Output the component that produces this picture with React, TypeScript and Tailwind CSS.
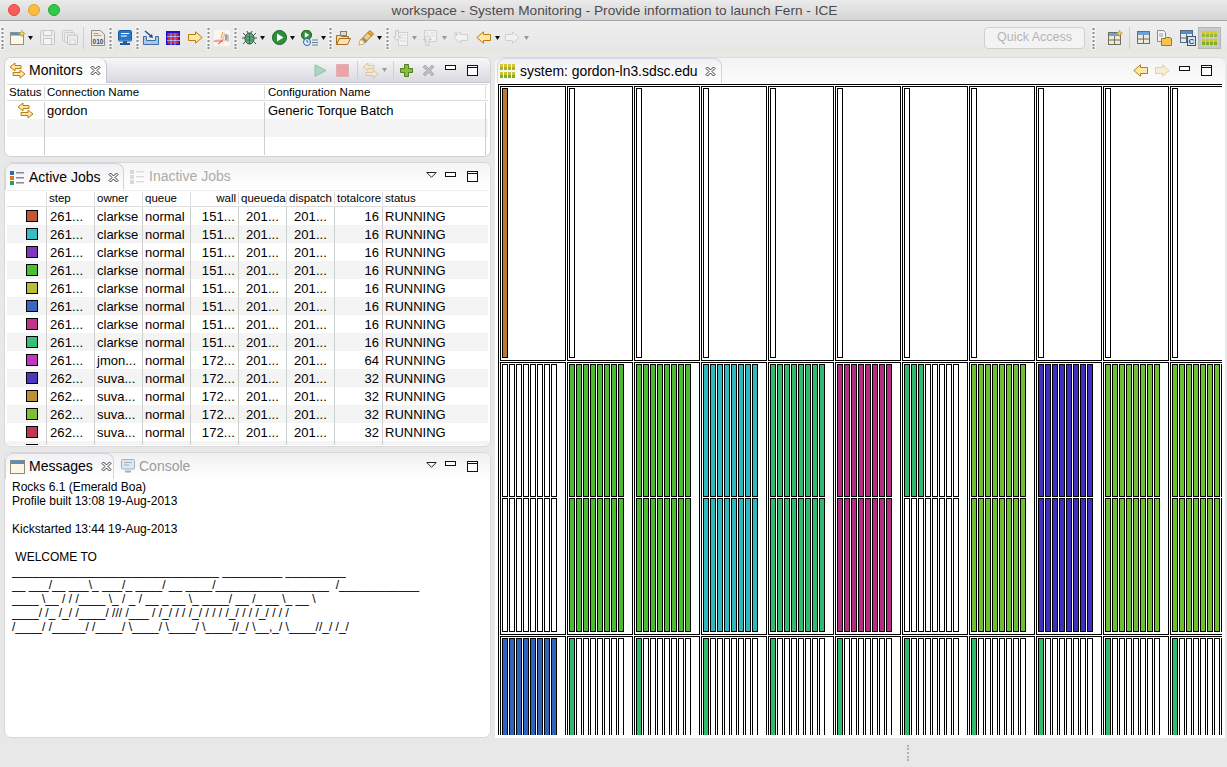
import type { ReactNode } from "react";

const jobs = [
  { color: "bg-[#BE5A36]", step: "261...", owner: "clarkse", wall: "151...", cores: 16 },
  { color: "bg-[#37BEC0]", step: "261...", owner: "clarkse", wall: "151...", cores: 16 },
  { color: "bg-[#7F37BE]", step: "261...", owner: "clarkse", wall: "151...", cores: 16 },
  { color: "bg-[#4DBE37]", step: "261...", owner: "clarkse", wall: "151...", cores: 16 },
  { color: "bg-[#B8BE37]", step: "261...", owner: "clarkse", wall: "151...", cores: 16 },
  { color: "bg-[#3768BE]", step: "261...", owner: "clarkse", wall: "151...", cores: 16 },
  { color: "bg-[#BE3787]", step: "261...", owner: "clarkse", wall: "151...", cores: 16 },
  { color: "bg-[#37BE78]", step: "261...", owner: "clarkse", wall: "151...", cores: 16 },
  { color: "bg-[#BE37C0]", step: "261...", owner: "jmon...", wall: "172...", cores: 64 },
  { color: "bg-[#4A37BE]", step: "262...", owner: "suva...", wall: "172...", cores: 32 },
  { color: "bg-[#BE8F37]", step: "262...", owner: "suva...", wall: "172...", cores: 32 },
  { color: "bg-[#7FBE37]", step: "262...", owner: "suva...", wall: "172...", cores: 32 },
  { color: "bg-[#BE3755]", step: "262...", owner: "suva...", wall: "172...", cores: 32 },
  { color: "bg-[#222222]", step: "", owner: "", wall: "", cores: "" },
];

const messages = [
  "Rocks 6.1 (Emerald Boa)",
  "Profile built 13:08 19-Aug-2013",
  "",
  "Kickstarted 13:44 19-Aug-2013",
  "",
  " WELCOME TO",
  "_______________________________ _________ _________",
  "__ ___/__ ___\\_ ___/_ ____/ __ ____/_________________  /____________",
  "____ \\__ / / /____ \\_ / _ / __ _ __ \\_ ____/ __ /_ __ \\_ __ \\",
  "____/ /_ /_/ /____/ /// /___ / /_/ / / /_/ / / / /_/ / / /_/ / / /",
  "/____/ /_____/ /____/ \\____/ \\____/ \\____//_/ \\__,_/ \\____//_/ /_/",
];

const TEAL = "bg-[#2FB9BF]";
const GREEN = "bg-[#4CBB32]";
const SEA = "bg-[#32BB6E]";
const PINK = "bg-[#B52E82]";
const LIME = "bg-[#6EBF32]";
const INDIGO = "bg-[#3F2FBF]";
const BLUE = "bg-[#2E64B9]";
const EMPTY = "bg-white";

// rows 2 and 3 of the system view, one entry per node
const nodes = [
  { top: EMPTY, topCount: 8, bottom: EMPTY, low: BLUE, lowCount: 8 },
  { top: GREEN, topCount: 8, bottom: GREEN, low: SEA, lowCount: 1 },
  { top: GREEN, topCount: 8, bottom: GREEN, low: SEA, lowCount: 1 },
  { top: TEAL, topCount: 8, bottom: TEAL, low: SEA, lowCount: 1 },
  { top: SEA, topCount: 8, bottom: SEA, low: SEA, lowCount: 1 },
  { top: PINK, topCount: 8, bottom: PINK, low: SEA, lowCount: 1 },
  { top: SEA, topCount: 3, bottom: EMPTY, low: SEA, lowCount: 1 },
  { top: LIME, topCount: 8, bottom: LIME, low: SEA, lowCount: 1 },
  { top: INDIGO, topCount: 8, bottom: INDIGO, low: SEA, lowCount: 1 },
  { top: LIME, topCount: 8, bottom: LIME, low: SEA, lowCount: 1 },
  { top: LIME, topCount: 8, bottom: LIME, low: SEA, lowCount: 1 },
];

const Dropdown = ({ gray, className = "" }: { gray?: boolean; className?: string }) => (
  <svg width="5" height="4" viewBox="0 0 5 4" className={`shrink-0 ${className}`}>
    <path d="M0 0h5L2.5 4z" fill={gray ? "#9a9a9a" : "#111"} />
  </svg>
);

const Grip = ({ className = "" }: { className?: string }) => (
  <svg width="5" height="24" viewBox="0 0 5 24" className={`shrink-0 ${className}`}>
    <rect width="5" height="24" fill="#f2f2f2" />
    {[2, 6, 10, 14, 18, 21].map((y) => (
      <rect key={y} x="1.5" y={y} width="2" height="2" fill="#8d8d8d" />
    ))}
  </svg>
);

const Sep = ({ className = "" }: { className?: string }) => (
  <div className={`w-px h-[22px] bg-[#cfcfcf] shrink-0 ${className}`} />
);

const Arrow = ({ dir, faded, size = 15, className = "" }: { dir: "left" | "right"; faded?: boolean; size?: number; className?: string }) => (
  <svg width={size} height={size - 2} viewBox="0 0 15 13" className={`shrink-0 ${className}`}>
    <path
      d={dir === "right" ? "M.5 3.5h7V.8L14.2 6.5 7.5 12.2V9.5h-7z" : "M14.5 3.5h-7V.8L.8 6.5l6.7 5.7V9.5h7z"}
      fill={faded ? "#f6ecd8" : "#fde6a6"}
      stroke={faded ? "#e2cfa8" : "#b97d18"}
      strokeWidth="1"
    />
  </svg>
);

const GrayArrow = ({ dir, star, className = "" }: { dir: "left" | "right"; star?: boolean; className?: string }) => (
  <svg width="15" height="13" viewBox="0 0 15 13" className={`shrink-0 ${className}`}>
    <path
      d={dir === "right" ? "M.5 3.5h7V.8L14.2 6.5 7.5 12.2V9.5h-7z" : "M14.5 3.5h-7V.8L.8 6.5l6.7 5.7V9.5h7z"}
      fill="#f1f1f1"
      stroke="#cfcfcf"
    />
    {star && <path d="M1 1l3 3M4 1L1 4" stroke="#c4c4c4" />}
  </svg>
);

const SwapArrows = ({ faded }: { faded?: boolean }) => {
  const fill = faded ? "#f4e8d0" : "#fde6a6";
  const stroke = faded ? "#dcc69c" : "#b97d18";
  return (
    <svg width="17" height="17" viewBox="0 0 17 17" className="shrink-0">
      <path d="M12 3.5H6V1L1 5l5 4V6.5h6z" fill={fill} stroke={stroke} />
      <path d="M4 10.5h7V8l5 4-5 4v-2.5H4z" fill={fill} stroke={stroke} />
    </svg>
  );
};

const CloseIcon = () => (
  <svg width="11" height="11" viewBox="0 0 11 11" className="shrink-0">
    <path
      d="M1 2.5L2.5 1l3 3 3-3L10 2.5l-3 3 3 3L8.5 10l-3-3-3 3L1 8.5l3-3z"
      fill="#fff"
      stroke="#222"
      strokeWidth="0.9"
    />
  </svg>
);

const MinIcon = () => (
  <svg width="11" height="5" viewBox="0 0 11 5" className="shrink-0 mb-[5px]">
    <rect x=".5" y=".5" width="10" height="4" fill="#fff" stroke="#111" />
  </svg>
);

const MaxIcon = () => (
  <svg width="11" height="11" viewBox="0 0 11 11" className="shrink-0">
    <rect x=".5" y=".5" width="10" height="10" fill="#fff" stroke="#111" />
    <rect x="0" y="0" width="11" height="3" fill="#111" />
    <rect x="1" y="1" width="9" height="1" fill="#fff" />
  </svg>
);

const ViewMenu = () => (
  <svg width="11" height="6" viewBox="0 0 11 6" className="shrink-0 mb-[3px]">
    <path d="M.8.5h9.400L5.500 5.300z" fill="#fff" stroke="#222" />
  </svg>
);

const SystemGrid = () => (
  <svg width="15" height="14" viewBox="0 0 15 14" className="shrink-0">
    {[0, 4, 8, 12].map((x) => (
      <g key={x}>
        <rect x={x} y="0" width="3" height="3" fill="#d8c63a" />
        <rect x={x} y="3" width="3" height="3" fill="#9ab82a" />
        <rect x={x} y="8" width="3" height="3" fill="#c8c434" />
        <rect x={x} y="11" width="3" height="3" fill="#7fae22" />
      </g>
    ))}
  </svg>
);

const JobsIcon = ({ faded }: { faded?: boolean }) => (
  <svg width="15" height="15" viewBox="0 0 15 15" className="shrink-0">
    <rect x="0" y="1" width="4" height="4" fill={faded ? "#d8d8d8" : "#2a6cb0"} />
    <rect x="0" y="6" width="4" height="4" fill={faded ? "#dcdcdc" : "#d9762b"} />
    <rect x="0" y="11" width="4" height="4" fill={faded ? "#d8d8d8" : "#2f9e4a"} />
    {[2, 7, 12].map((y) => (
      <g key={y}>
        <rect x="6" y={y} width="8" height="1" fill={faded ? "#dddddd" : "#8a8a8a"} />
        <rect x="6" y={y + 1} width="8" height="1" fill={faded ? "#eeeeee" : "#bdbdbd"} />
      </g>
    ))}
  </svg>
);

const MessagesIcon = () => (
  <svg width="15" height="14" viewBox="0 0 15 14" className="shrink-0">
    <rect x=".5" y=".5" width="14" height="13" fill="#fdf8e6" stroke="#8c8c72" />
    <rect x="1" y="1" width="13" height="3" fill="#4f8fd0" />
  </svg>
);

const ConsoleIcon = () => (
  <svg width="14" height="14" viewBox="0 0 14 14" className="shrink-0">
    <rect x=".5" y=".5" width="13" height="9.5" rx="1" fill="#dfe6ec" stroke="#9fb2c2" />
    <path d="M3 3.5h8M3 6h5" stroke="#9fb2c2" />
    <path d="M4 12.5h6" stroke="#9fb2c2" strokeWidth="2" />
  </svg>
);

// toolbar pictures
const NewFile = () => (
  <svg width="16" height="15" viewBox="0 0 16 15" className="shrink-0">
    <rect x=".5" y="2.5" width="13" height="12" fill="#fdf7e4" stroke="#93917a" />
    <rect x="1" y="3" width="12" height="2.5" fill="#4f8fd0" />
    <path d="M12 0l1 2.5 2.5 1-2.5 1-1 2.5-1-2.5-2.5-1 2.5-1z" fill="#f6d254" stroke="#c79a2a" strokeWidth=".5" />
  </svg>
);

const SaveIcon = () => (
  <svg width="15" height="15" viewBox="0 0 15 15" className="shrink-0">
    <rect x=".5" y=".5" width="14" height="14" rx="1" fill="#ececec" stroke="#c9c9c9" />
    <rect x="3.5" y=".5" width="8" height="5" fill="#f4f4f4" stroke="#c9c9c9" />
    <rect x="3.5" y="8.5" width="8" height="6" fill="#f4f4f4" stroke="#c9c9c9" />
  </svg>
);

const SaveAllIcon = () => (
  <svg width="16" height="15" viewBox="0 0 16 15" className="shrink-0">
    <rect x=".5" y=".5" width="10" height="10" rx="1" fill="#ececec" stroke="#cdcdcd" />
    <rect x="2.5" y="2.5" width="10" height="10" rx="1" fill="#ececec" stroke="#cdcdcd" />
    <rect x="5.5" y="5" width="10" height="9.5" rx="1" fill="#ececec" stroke="#c4c4c4" />
    <rect x="8" y="10" width="5" height="4" fill="#f6f6f6" stroke="#c9c9c9" strokeWidth=".7" />
  </svg>
);

const DocBinary = () => (
  <svg width="14" height="16" viewBox="0 0 14 16" className="shrink-0">
    <path d="M.5.5h9l4 4v11H.5z" fill="#efeade" stroke="#8f8f85" />
    <path d="M2.5 3.5h5M2.5 5.5h8" stroke="#9aa7b5" />
    <text x="7" y="14" textAnchor="middle" fontSize="6.5" fontWeight="700" fontFamily="Liberation Sans" fill="#244f80">010</text>
  </svg>
);

const MonitorIcon = () => (
  <svg width="14" height="15" viewBox="0 0 14 15" className="shrink-0">
    <rect x=".5" y=".5" width="13" height="10.5" rx="1" fill="#d9e8f6" stroke="#1a5da6" />
    <rect x="1" y="1" width="12" height="9.5" fill="#2a78c4" />
    <path d="M3 3.5h8M3 6h6" stroke="#fff" />
    <rect x="5" y="11" width="4" height="2" fill="#2a5f96" />
    <rect x="2" y="13" width="10" height="2" fill="#1a5da6" />
  </svg>
);

const TrayIcon = () => (
  <svg width="16" height="15" viewBox="0 0 16 15" className="shrink-0">
    <path d="M.5 6.5h3v4h9v-4h3v8H.5z" fill="#a9c6e4" stroke="#3d6f9f" />
    <path d="M2 1l6 5" stroke="#1f4f8c" strokeWidth="1.5" />
    <path d="M10 8L5.5 7l3.5-3z" fill="#1f4f8c" />
  </svg>
);

const GridIcon = () => (
  <svg width="14" height="14" viewBox="0 0 14 14" className="shrink-0">
    <rect width="14" height="14" fill="#1414d8" />
    {[2, 6, 10].map((y) =>
      [1.5, 5.5, 9.5].map((x) => <rect key={`${x}-${y}`} x={x} y={y} width="3" height="3" fill="#e62222" />),
    )}
    <path d="M5 2v12M9 2v12M1 5.5h13M1 9.5h13" stroke="#fff" strokeWidth=".6" />
  </svg>
);

const SparkIcon = () => (
  <svg width="16" height="16" viewBox="0 0 16 16" className="shrink-0">
    <rect width="16" height="16" fill="#fbf5f0" />
    <path d="M0 10l8-1 3-8-1 8 6 3-7-1-5 4 3-5z" fill="#f6c0ad" />
    <path d="M11 4l1 6M13 4l-1 6M14 5v6" stroke="#8f8f8f" />
    <path d="M0 11h9M8 11l-4 3" stroke="#e9534a" />
    <path d="M7 8l2-6" stroke="#eaa21e" />
  </svg>
);

const BugIcon = () => (
  <svg width="15" height="15" viewBox="0 0 15 15" className="shrink-0">
    <path d="M1 3l3 3M14 3l-3 3M0 8h3M15 8h-3M1 14l3-3M14 14l-3-3M5 1l1 2M10 1L9 3" stroke="#3a5a4a" />
    <ellipse cx="7.5" cy="8.5" rx="4.5" ry="5.5" fill="#6fae84" stroke="#27503a" />
    <path d="M7.5 3v11M4 7h7M4 10h7" stroke="#27503a" strokeWidth=".7" />
  </svg>
);

const PlayCircle = ({ size = 15 }: { size?: number }) => (
  <svg width={size} height={size} viewBox="0 0 15 15" className="shrink-0">
    <circle cx="7.5" cy="7.5" r="7" fill="#2f8f3a" stroke="#1b5e24" />
    <path d="M5 3.5l6.5 4-6.5 4z" fill="#fff" />
  </svg>
);

const RunList = () => (
  <svg width="17" height="16" viewBox="0 0 17 16" className="shrink-0">
    <circle cx="5.5" cy="5" r="5" fill="#2f8f3a" stroke="#1b5e24" />
    <path d="M3.8 2.3l4.4 2.7-4.4 2.7z" fill="#fff" />
    <circle cx="6" cy="12" r="3.5" fill="#e8f0fa" stroke="#2563a8" />
    <path d="M6 10v2h1.5" stroke="#2563a8" fill="none" />
    <path d="M11 10h6M11 12.5h6M11 15h6" stroke="#6a7f96" />
  </svg>
);

const FolderIcon = () => (
  <svg width="15" height="14" viewBox="0 0 15 14" className="shrink-0">
    <rect x="4.5" y=".5" width="6" height="4" fill="#dcdcdc" stroke="#7e7e7e" />
    <path d="M.5 4.5h4l1 1h7v2h-9l-3 6z" fill="#f3dcb0" stroke="#a86f1e" />
    <path d="M3.5 7.5h11l-3 6H.5z" fill="#f7e3ba" stroke="#a86f1e" />
  </svg>
);

const BrushIcon = () => (
  <svg width="16" height="16" viewBox="0 0 16 16" className="shrink-0">
    <path d="M1 15l1.5-5L10 2.5l3.5 3.5L6 13.5z" fill="#f6cf85" stroke="#a96f1c" />
    <path d="M1 15l1.5-5 3.5 3.5z" fill="#fff3d0" />
    <path d="M10 2.5L12 .5 15.5 4l-2 2z" fill="#f0a83c" stroke="#a96f1c" />
    <path d="M4 9.5l3.5 3.5 2-2L6 7.5z" fill="#8d8d8d" />
  </svg>
);

const DisabledDown = () => (
  <svg width="15" height="16" viewBox="0 0 15 16" className="shrink-0">
    <rect x="5.5" y="2.5" width="9" height="13" fill="#f3f3f3" stroke="#d0d0d0" />
    <path d="M7 5h6M7 8h6M7 11h6" stroke="#d8d8d8" />
    <path d="M2.5.5h3v6h2l-3.5 4-3.500-4h2z" fill="#ececec" stroke="#c8c8c8" />
  </svg>
);

const DisabledUp = () => (
  <svg width="14" height="16" viewBox="0 0 14 16" className="shrink-0">
    <rect x="1.500" y=".5" width="12" height="11" fill="#f3f3f3" stroke="#d0d0d0" />
    <path d="M7 3h5M7 6h5M3 3h2" stroke="#d8d8d8" />
    <path d="M3 15.500v-6H.5L4.500 5l4 4.500H6v6z" fill="#ececec" stroke="#c8c8c8" />
  </svg>
);

const PerspectiveNew = () => (
  <svg width="15" height="15" viewBox="0 0 15 15" className="shrink-0">
    <rect x=".5" y="2.500" width="12" height="12" fill="#efe9d8" stroke="#6f6f60" />
    <rect x="1" y="3" width="11" height="3" fill="#6ea2d4" />
    <path d="M6.500 6v8M1 10h11" stroke="#6f6f60" />
    <path d="M11.500 0l1 2.300 2.300 1-2.300 1-1 2.300-1-2.300-2.300-1 2.300-1z" fill="#f6d254" stroke="#b48a20" strokeWidth=".5" />
  </svg>
);

const PerspectiveLayout = () => (
  <svg width="13" height="13" viewBox="0 0 13 13" className="shrink-0">
    <rect x=".5" y=".5" width="12" height="12" fill="#efe9d8" stroke="#6f6f60" />
    <rect x="1" y="1" width="11" height="3" fill="#6ea2d4" />
    <path d="M6.500 4v9M1 8h11" stroke="#6f6f60" />
  </svg>
);

const PerspectiveFolder = () => (
  <svg width="15" height="16" viewBox="0 0 15 16" className="shrink-0">
    <path d="M.5.5h6l2 2v9H.5z" fill="#f3f3f3" stroke="#8a8a8a" />
    <path d="M2 4h4M2 6h4" stroke="#a0a0a0" />
    <path d="M4.500 8.500h4l1-1h3l2 1v7h-10z" fill="#f5c451" stroke="#a8761a" />
  </svg>
);

const PerspectiveC = () => (
  <svg width="16" height="16" viewBox="0 0 16 16" className="shrink-0">
    <rect x=".5" y=".5" width="12" height="12" fill="#efe9d8" stroke="#566a80" />
    <rect x="1" y="1" width="11" height="3" fill="#4f8fd0" />
    <path d="M6.500 4v8M1 8h11" stroke="#566a80" />
    <rect x="7.500" y="6.500" width="8" height="9" fill="#dfe6ee" stroke="#33577f" />
    <text x="11.500" y="14" textAnchor="middle" fontSize="8" fontWeight="700" fontFamily="Liberation Sans" fill="#1f4f8c">C</text>
  </svg>
);

const PlayFaded = () => (
  <svg width="13" height="13" viewBox="0 0 13 13" className="shrink-0">
    <path d="M1 .8l11 5.700-11 5.700z" fill="#a9d8c0" stroke="#8cc2a6" />
  </svg>
);

const StopFaded = () => (
  <svg width="13" height="13" viewBox="0 0 13 13" className="shrink-0">
    <rect x=".5" y=".5" width="12" height="12" fill="#eda3a3" stroke="#dcb4b4" />
  </svg>
);

const PlusIcon = () => (
  <svg width="13" height="13" viewBox="0 0 13 13" className="shrink-0">
    <path d="M4.500.5h4v4h4v4h-4v4h-4v-4h-4v-4h4z" fill="#8dbb3c" stroke="#4f7f22" />
  </svg>
);

const RemoveFaded = () => (
  <svg width="13" height="13" viewBox="0 0 13 13" className="shrink-0">
    <path d="M1 3l2-2 3.500 3.500L10 1l2 2-3.500 3.500L12 10l-2 2-3.500-3.500L3 12l-2-2 3.500-3.500z" fill="#bdbdbd" stroke="#b0b0b0" />
  </svg>
);

const Cell = ({ w, className = "", children }: { w: string; className?: string; children?: ReactNode }) => (
  <div className={`${w} shrink-0 h-full overflow-hidden whitespace-nowrap border-r border-[#cfcfcf] ${className}`}>{children}</div>
);

const HeadCell = ({ w, className = "", children }: { w: string; className?: string; children?: ReactNode }) => (
  <div className={`${w} shrink-0 h-[13px] leading-[13px] overflow-hidden whitespace-nowrap border-r border-[#dcdcdc] ${className}`}>{children}</div>
);

const Bar = ({ fill }: { fill: string }) => <div className={`w-[6px] h-full border border-black ${fill}`} />;

const Socket = ({ fill, count, className = "" }: { fill: string; count: number; className?: string }) => (
  <div className={`flex gap-px ${className}`}>
    {[0, 1, 2, 3, 4, 5, 6, 7].map((i) => (
      <Bar key={i} fill={i < count ? fill : EMPTY} />
    ))}
  </div>
);

type ColumnProps = { index: number; top: string; topCount: number; bottom: string; low: string; lowCount: number };

const Column = ({ index, top, topCount, bottom, low, lowCount }: ColumnProps) => (
  <div className="w-[66px] shrink-0 flex flex-col gap-px">
    <div className="h-[275px] border border-black pl-px pt-px pb-[2px] shrink-0">
      <Bar fill={index === 0 ? "bg-[#BA7B30]" : EMPTY} />
    </div>
    <div className="h-[273px] border border-black pl-px pt-px shrink-0 flex flex-col gap-px">
      <Socket fill={top} count={topCount} className="h-[133px]" />
      <Socket fill={bottom} count={8} className="h-[134px]" />
    </div>
    <div className="h-[300px] border border-black pl-px pt-px shrink-0">
      <Socket fill={low} count={lowCount} className="h-[133px]" />
    </div>
  </div>
);

const Tab = ({ w, children }: { w: string; children: ReactNode }) => (
  <div className={`${w} h-full flex items-center pl-[4px] rounded-t-[8px] border border-b-0 border-[#d4d4dc] bg-gradient-to-b from-[#f1f1f5] to-white shrink-0`}>
    {children}
  </div>
);

export default function App() {
  return (
    <div
      className="w-[1227px] h-[767px] overflow-hidden flex flex-col bg-[#e8e8e8] text-black"
      style={{ fontFamily: '"Liberation Sans", Arial, sans-serif' }}
    >
      {/* title bar */}
      <div className="h-[21px] shrink-0 relative flex items-center justify-center pt-[2px] bg-gradient-to-b from-[#ebebeb] to-[#d4d4d4] border-b border-[#a8a8a8] text-[13.65px] text-[#4b4b4b]">
        <div className="absolute left-[8px] top-[4px] flex gap-[8px]">
          <div className="w-[12px] h-[12px] rounded-full bg-[#fc5b57] border border-[#e0443e]" />
          <div className="w-[12px] h-[12px] rounded-full bg-[#fdbc40] border border-[#dea123]" />
          <div className="w-[12px] h-[12px] rounded-full bg-[#34c84a] border border-[#1aab29]" />
        </div>
        <span className="ml-[2px]">workspace - System Monitoring - Provide information to launch Fern - ICE</span>
      </div>

      {/* toolbar */}
      <div className="h-[32px] shrink-0 flex items-center pt-[2px] pr-[6px] bg-gradient-to-b from-[#efefef] to-[#e6e6e6] border-b border-[#ece9d8]">
        <Grip />
        <div className="ml-[5px]"><NewFile /></div>
        <Dropdown className="ml-[2px]" />
        <div className="ml-[7px]"><SaveIcon /></div>
        <div className="ml-[7px]"><SaveAllIcon /></div>
        <Sep className="ml-[5px]" />
        <div className="ml-[7px]"><DocBinary /></div>
        <Grip className="ml-[3px]" />
        <div className="ml-[5px]"><MonitorIcon /></div>
        <Grip className="ml-[3px]" />
        <div className="ml-[3px]"><TrayIcon /></div>
        <div className="ml-[7px]"><GridIcon /></div>
        <Arrow dir="right" className="ml-[8px]" />
        <Grip className="ml-[3px]" />
        <div className="ml-[3px]"><SparkIcon /></div>
        <Grip className="ml-[3px]" />
        <div className="ml-[4px]"><BugIcon /></div>
        <Dropdown className="ml-[3px]" />
        <div className="ml-[7px]"><PlayCircle /></div>
        <Dropdown className="ml-[3px]" />
        <div className="ml-[6px]"><RunList /></div>
        <Dropdown className="ml-[3px]" />
        <Grip className="ml-[2px]" />
        <div className="ml-[3px]"><FolderIcon /></div>
        <div className="ml-[7px]"><BrushIcon /></div>
        <Dropdown className="ml-[3px]" />
        <Grip className="ml-[3px]" />
        <div className="ml-[3px]"><DisabledDown /></div>
        <Dropdown gray className="ml-[4px]" />
        <div className="ml-[6px]"><DisabledUp /></div>
        <Dropdown gray className="ml-[5px]" />
        <GrayArrow dir="left" star className="ml-[6px]" />
        <Arrow dir="left" className="ml-[8px]" />
        <Dropdown className="ml-[4px]" />
        <GrayArrow dir="right" className="ml-[5px]" />
        <Dropdown gray className="ml-[4px]" />

        <div className="ml-auto w-[101px] h-[22px] rounded-[4px] border border-[#cfcfcf] bg-[#f3f3f3] flex items-center justify-center text-[12.5px] text-[#b4b4b4]">
          Quick Access
        </div>
        <Grip className="ml-[6px]" />
        <div className="ml-[12px]"><PerspectiveNew /></div>
        <Sep className="ml-[6px]" />
        <div className="ml-[7px]"><PerspectiveLayout /></div>
        <div className="ml-[7px]"><PerspectiveFolder /></div>
        <div className="ml-[8px]"><PerspectiveC /></div>
        <div className="ml-[2px] w-[23px] h-[22px] bg-[#c9c9c9] border border-[#b5b5b5] flex items-center justify-center">
          <SystemGrid />
        </div>
      </div>

      {/* perspective */}
      <div className="flex-1 min-h-0 flex pt-[4px] pl-[4px]">
        <div className="w-[487px] shrink-0 flex flex-col gap-[5px]">
          {/* monitors */}
          <div className="h-[100px] shrink-0 rounded-[7px] border border-[#d2d2d2] bg-white overflow-hidden">
            <div className="h-[25px] flex items-stretch bg-gradient-to-b from-[#f7f7f8] to-[#d9d9e1] border-b border-[#c6c6d2]">
              <div className="w-[102px] -mb-px flex items-center pl-[4px] rounded-t-[8px] border-r border-[#c6c6d2] bg-gradient-to-b from-[#f8f8f8] to-white shrink-0">
                <SwapArrows />
                <span className="text-[14px] ml-[3px]">Monitors</span>
                <span className="ml-[7px]"><CloseIcon /></span>
              </div>
              <div className="ml-auto flex items-center pr-[5px]">
                <div className="w-[22px] flex justify-center"><PlayFaded /></div>
                <div className="w-[22px] flex justify-center"><StopFaded /></div>
                <div className="w-[8px] flex justify-center"><Sep className="!h-[18px]" /></div>
                <div className="w-[18px] flex justify-center"><SwapArrows faded /></div>
                <div className="w-[10px] flex justify-center"><Dropdown gray /></div>
                <div className="w-[8px] flex justify-center"><Sep className="!h-[18px]" /></div>
                <div className="w-[18px] flex justify-center"><PlusIcon /></div>
                <div className="w-[26px] flex justify-center"><RemoveFaded /></div>
                <div className="w-[18px] flex justify-center"><MinIcon /></div>
                <div className="w-[26px] flex justify-center"><MaxIcon /></div>
              </div>
            </div>
            <div className="mx-[2px] mt-px border-t border-[#dcdcdc] text-[13px]">
              <div className="h-[16px] flex items-center border-b border-[#dcdcdc] text-[11.5px]">
                <HeadCell w="w-[38px]" className="pl-[2px]">Status</HeadCell>
                <HeadCell w="w-[220px]" className="pl-[2px]">Connection Name</HeadCell>
                <HeadCell w="w-[221px]" className="pl-[3px]">Configuration Name</HeadCell>
              </div>
              <div className="h-[18px] flex leading-[18px] pt-px">
                <Cell w="w-[38px]" className="flex items-center justify-center"><SwapArrows /></Cell>
                <Cell w="w-[220px]" className="pl-[2px]">gordon</Cell>
                <Cell w="w-[221px]" className="pl-[3px]">Generic Torque Batch</Cell>
              </div>
              <div className="h-[18px] flex bg-[#f4f4f4]">
                <Cell w="w-[38px]" />
                <Cell w="w-[220px]" />
                <Cell w="w-[221px]" />
              </div>
              <div className="h-[18px] flex">
                <Cell w="w-[38px]" />
                <Cell w="w-[220px]" />
                <Cell w="w-[221px]" />
              </div>
            </div>
          </div>

          {/* jobs */}
          <div className="h-[285px] shrink-0 rounded-[7px] border border-[#d8d8d8] bg-white overflow-hidden">
            <div className="h-[27px] flex items-stretch bg-gradient-to-b from-[#f5f5f5] to-[#ffffff]">
              <Tab w="w-[119px]">
                <JobsIcon />
                <span className="text-[14px] ml-[4px]">Active Jobs</span>
                <span className="ml-[7px]"><CloseIcon /></span>
              </Tab>
              <div className="flex items-center ml-[6px]">
                <JobsIcon faded />
                <span className="text-[14px] ml-[4px] text-[#ababab]">Inactive Jobs</span>
              </div>
              <div className="ml-auto flex items-center pr-[4px]">
                <div className="w-[22px] flex justify-center"><ViewMenu /></div>
                <div className="w-[16px] flex justify-center"><MinIcon /></div>
                <div className="w-[28px] flex justify-center"><MaxIcon /></div>
              </div>
            </div>
            <div className="mx-[2px] h-[255px] overflow-hidden text-[13px] border-t border-[#eeeeee]">
              <div className="h-[16px] flex items-center border-b border-[#dcdcdc] text-[11.5px]">
                <HeadCell w="w-[40px]" />
                <HeadCell w="w-[48px]" className="pl-[2px]">step</HeadCell>
                <HeadCell w="w-[48px]" className="pl-[2px]">owner</HeadCell>
                <HeadCell w="w-[48px]" className="pl-[2px]">queue</HeadCell>
                <HeadCell w="w-[48px]" className="pr-[2px] text-right">wall</HeadCell>
                <HeadCell w="w-[48px]" className="pl-[2px]">queueda</HeadCell>
                <HeadCell w="w-[48px]" className="pl-[2px]">dispatch</HeadCell>
                <HeadCell w="w-[48px]" className="pl-[2px]">totalcore</HeadCell>
                <div className="pl-[2px] leading-[13px]">status</div>
              </div>
              {jobs.map((job, i) => (
                <div key={i} className={`h-[18px] flex leading-[20px] ${i % 2 === 1 ? "bg-[#f4f4f4]" : ""}`}>
                  <Cell w="w-[40px]" className="flex items-center justify-center pl-[10px]">
                    <div className={`w-[12px] h-[12px] shrink-0 border border-black ${job.color}`} />
                  </Cell>
                  <Cell w="w-[48px]" className="pl-[3px] tracking-[0.1px]">{job.step}</Cell>
                  <Cell w="w-[48px]" className="pl-[2px]">{job.owner}</Cell>
                  <Cell w="w-[48px]" className="pl-[2px]">{job.step ? "normal" : ""}</Cell>
                  <Cell w="w-[48px]" className="text-right pr-[3px] tracking-[0.1px]">{job.wall}</Cell>
                  <Cell w="w-[48px]" className="text-center tracking-[0.1px]">{job.step ? "201..." : ""}</Cell>
                  <Cell w="w-[48px]" className="text-center tracking-[0.1px]">{job.step ? "201..." : ""}</Cell>
                  <Cell w="w-[48px]" className="text-right pr-[3px]">{job.cores}</Cell>
                  <div className="flex-1 pl-[2px]">{job.step ? "RUNNING" : ""}</div>
                </div>
              ))}
            </div>
          </div>

          {/* messages */}
          <div className="h-[286px] shrink-0 rounded-[7px] border border-[#d8d8d8] bg-white overflow-hidden">
            <div className="h-[26px] flex items-stretch bg-gradient-to-b from-[#f0f0f0] to-[#ffffff]">
              <Tab w="w-[109px]">
                <MessagesIcon />
                <span className="text-[14px] ml-[4px]">Messages</span>
                <span className="ml-[8px]"><CloseIcon /></span>
              </Tab>
              <div className="flex items-center ml-[7px]">
                <ConsoleIcon />
                <span className="text-[14px] ml-[4px] text-[#9b9b9b]">Console</span>
              </div>
              <div className="ml-auto flex items-center pr-[4px]">
                <div className="w-[22px] flex justify-center"><ViewMenu /></div>
                <div className="w-[16px] flex justify-center"><MinIcon /></div>
                <div className="w-[28px] flex justify-center"><MaxIcon /></div>
              </div>
            </div>
            <div className="pl-[7px] pt-px text-[12px] leading-[14px] whitespace-pre">
              {messages.map((line, i) => (
                <div key={i} className="h-[14px]">{line}</div>
              ))}
            </div>
          </div>
        </div>

        {/* system view */}
        <div className="ml-[4px] w-[730px] h-[681px] shrink-0 rounded-t-[7px] border-t border-[#dcdcdc] bg-white overflow-hidden flex flex-col">
          <div className="h-[25px] shrink-0 flex items-stretch pl-[2px] bg-gradient-to-b from-[#f4f4f4] to-[#fbfbfb]">
            <div className="w-[225px] flex items-center pl-[2px] rounded-t-[8px] border border-b-0 border-[#d4d4dc] bg-gradient-to-b from-[#f1f1f5] to-white shrink-0">
              <SystemGrid />
              <span className="text-[13.9px] ml-[5px]">system: gordon-ln3.sdsc.edu</span>
              <span className="ml-[7px]"><CloseIcon /></span>
            </div>
            <div className="ml-auto flex items-center pr-[8px]">
              <div className="w-[22px] flex justify-center"><Arrow dir="left" /></div>
              <div className="w-[22px] flex justify-center"><Arrow dir="right" faded /></div>
              <div className="w-[22px] flex justify-center"><MinIcon /></div>
              <div className="w-[22px] flex justify-center"><MaxIcon /></div>
            </div>
          </div>
          <div className="ml-[3px] mt-px w-[724px] h-[651px] shrink-0 overflow-hidden border-l border-t border-black pl-px pt-px flex gap-px">
            {nodes.map((node, i) => (
              <Column key={i} index={i} {...node} />
            ))}
          </div>
        </div>
      </div>

      {/* status bar */}
      <div className="h-[29px] shrink-0 flex items-center pl-[907px]">
        <div className="w-[2px] h-[16px] border-l-2 border-dotted border-[#b0b0b0]" />
      </div>
    </div>
  );
}
